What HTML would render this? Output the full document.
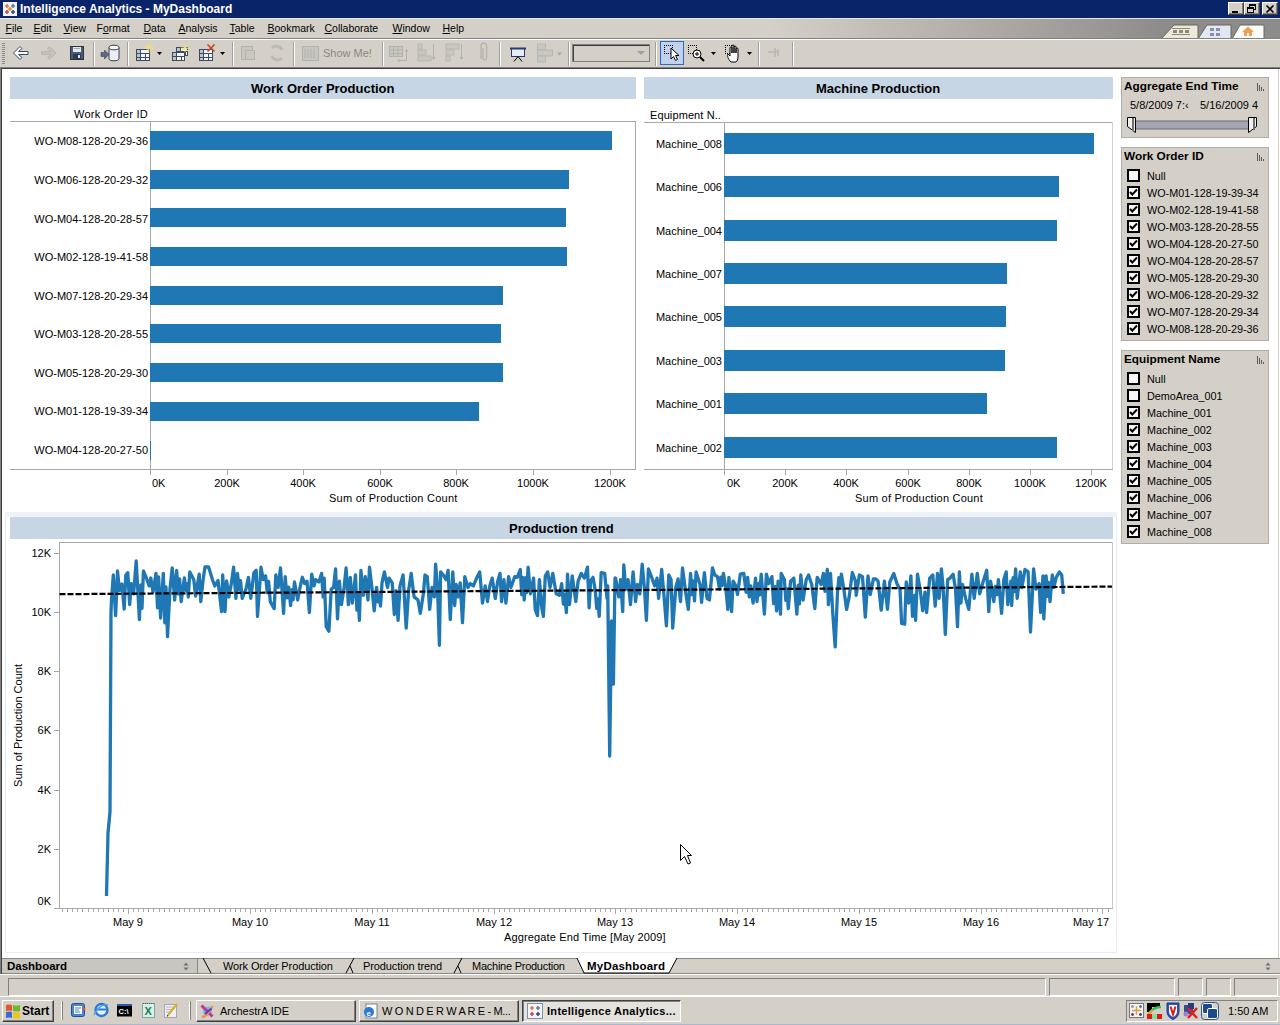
<!DOCTYPE html><html><head><meta charset="utf-8"><style>
html,body{margin:0;padding:0;width:1280px;height:1025px;overflow:hidden;background:#fff;}
body{position:relative;font-family:"Liberation Sans",sans-serif;font-size:11px;color:#000;}
div{position:absolute;box-sizing:border-box;}
.t{white-space:nowrap;line-height:13px;}
.u{text-decoration:underline;}
svg{position:absolute;left:0;top:0;}
</style></head><body>
<div style="left:0px;top:0px;width:1280px;height:18px;background:#0A246A"></div>
<div class="t" style="left:20px;top:2px;font-weight:bold;font-size:12px;color:#fff;line-height:14px">Intelligence Analytics - MyDashboard</div>
<svg style="left:3px;top:2px" width="14" height="14" viewBox="0 0 14 14"><rect x="0" y="0" width="14" height="14" fill="#F4F4F8"/>
<g stroke-width="1.6"><path d="M4 2v4M2 4h4" stroke="#E07B39"/><path d="M10 2v4M8 4h4" stroke="#5B7BA8"/><path d="M4 8v4M2 10h4" stroke="#C0504D"/><path d="M10 8v4M8 10h4" stroke="#2F4F7F"/><path d="M7 5v4M5 7h4" stroke="#E89040"/></g></svg>
<div style="left:1228px;top:2px;width:16px;height:13px;background:#D4D0C8;border-top:1px solid #fff;border-left:1px solid #fff;border-right:1px solid #404040;border-bottom:1px solid #404040;box-shadow:inset -1px -1px 0 #808080"></div>
<svg style="left:1228px;top:2px" width="16" height="14" viewBox="0 0 16 14"><rect x="4" y="9" width="6" height="2" fill="#000"/></svg>
<div style="left:1244px;top:2px;width:16px;height:13px;background:#D4D0C8;border-top:1px solid #fff;border-left:1px solid #fff;border-right:1px solid #404040;border-bottom:1px solid #404040;box-shadow:inset -1px -1px 0 #808080"></div>
<svg style="left:1244px;top:2px" width="16" height="14" viewBox="0 0 16 14"><rect x="5.5" y="2.5" width="6" height="5" fill="none" stroke="#000"/><rect x="5" y="2" width="7" height="2" fill="#000"/><rect x="3.5" y="5.5" width="6" height="5" fill="#D4D0C8" stroke="#000"/><rect x="3" y="5" width="7" height="2" fill="#000"/></svg>
<div style="left:1262px;top:2px;width:16px;height:13px;background:#D4D0C8;border-top:1px solid #fff;border-left:1px solid #fff;border-right:1px solid #404040;border-bottom:1px solid #404040;box-shadow:inset -1px -1px 0 #808080"></div>
<svg style="left:1262px;top:2px" width="16" height="14" viewBox="0 0 16 14"><path d="M4.5 3.5l7 7M11.5 3.5l-7 7" stroke="#000" stroke-width="1.6"/></svg>
<div style="left:0;top:18px;width:1280px;height:20px;background:linear-gradient(90deg,#D4D0C8 0px,#D4D0C8 770px,#C2BCB6 880px,#ADA8A4 1000px,#9A9794 1100px,#8E8C8A 1160px,#8E8C8A 1280px)"></div>
<div style="left:0px;top:18px;width:1280px;height:1px;background:#E8E6E0"></div>
<div class="t" style="left:5.5px;top:21px;font-size:10.5px;line-height:14px"><span class="u">F</span>ile</div>
<div class="t" style="left:33.5px;top:21px;font-size:10.5px;line-height:14px"><span class="u">E</span>dit</div>
<div class="t" style="left:63.5px;top:21px;font-size:10.5px;line-height:14px"><span class="u">V</span>iew</div>
<div class="t" style="left:96.5px;top:21px;font-size:10.5px;line-height:14px">F<span class="u">o</span>rmat</div>
<div class="t" style="left:143.5px;top:21px;font-size:10.5px;line-height:14px"><span class="u">D</span>ata</div>
<div class="t" style="left:178.5px;top:21px;font-size:10.5px;line-height:14px"><span class="u">A</span>nalysis</div>
<div class="t" style="left:229.5px;top:21px;font-size:10.5px;line-height:14px"><span class="u">T</span>able</div>
<div class="t" style="left:267.5px;top:21px;font-size:10.5px;line-height:14px"><span class="u">B</span>ookmark</div>
<div class="t" style="left:324.5px;top:21px;font-size:10.5px;line-height:14px"><span class="u">C</span>ollaborate</div>
<div class="t" style="left:392.5px;top:21px;font-size:10.5px;line-height:14px"><span class="u">W</span>indow</div>
<div class="t" style="left:442.5px;top:21px;font-size:10.5px;line-height:14px"><span class="u">H</span>elp</div>
<svg style="left:1155px;top:24px" width="125" height="15" viewBox="0 0 125 15">
<path d="M6 15 L19 1 L43 1 L43 15 Z" fill="#ECE9D8" stroke="#6A6660"/>
<path d="M43 15 L52 1 L76 1 L76 15 Z" fill="#E3E6F3" stroke="#6A6660"/>
<path d="M77 15 L85 1 L109 1 L109 15 Z" fill="#FCFCFA" stroke="#6A6660"/>
<g fill="#8E8A78"><rect x="18" y="6" width="4" height="3"/><rect x="24" y="6" width="4" height="3"/><rect x="30" y="6" width="4" height="3"/><rect x="17" y="4" width="18" height="1"/><rect x="17" y="10" width="18" height="1"/></g>
<g fill="#8792A8"><rect x="55" y="4" width="4" height="3"/><rect x="61" y="4" width="4" height="3"/><rect x="55" y="9" width="4" height="3"/><rect x="61" y="9" width="4" height="3"/></g>
<path d="M87 8 L93 2.5 L99 8 L97 8 L97 12 L89 12 L89 8 Z" fill="#F0A050"/><rect x="92" y="9" width="2" height="3" fill="#FCFCFA"/>
</svg>
<div style="left:0px;top:38px;width:1280px;height:1px;background:#808080"></div>
<div style="left:0px;top:39px;width:1280px;height:1px;background:#fff"></div>
<div style="left:0px;top:40px;width:1280px;height:27px;background:#D4D0C8"></div>
<svg style="left:2px;top:43px" width="4" height="22" viewBox="0 0 4 22"><rect x="0" y="0" width="3" height="1" fill="#8E8C88"/><rect x="0" y="2" width="3" height="1" fill="#8E8C88"/><rect x="0" y="4" width="3" height="1" fill="#8E8C88"/><rect x="0" y="6" width="3" height="1" fill="#8E8C88"/><rect x="0" y="8" width="3" height="1" fill="#8E8C88"/><rect x="0" y="10" width="3" height="1" fill="#8E8C88"/><rect x="0" y="12" width="3" height="1" fill="#8E8C88"/><rect x="0" y="14" width="3" height="1" fill="#8E8C88"/><rect x="0" y="16" width="3" height="1" fill="#8E8C88"/><rect x="0" y="18" width="3" height="1" fill="#8E8C88"/><rect x="0" y="20" width="3" height="1" fill="#8E8C88"/></svg>
<div style="left:93px;top:42px;width:1px;height:24px;background:#A0A0A0"></div>
<div style="left:94px;top:42px;width:1px;height:24px;background:#fff"></div>
<div style="left:127px;top:42px;width:1px;height:24px;background:#A0A0A0"></div>
<div style="left:128px;top:42px;width:1px;height:24px;background:#fff"></div>
<div style="left:232px;top:42px;width:1px;height:24px;background:#A0A0A0"></div>
<div style="left:233px;top:42px;width:1px;height:24px;background:#fff"></div>
<div style="left:293px;top:42px;width:1px;height:24px;background:#A0A0A0"></div>
<div style="left:294px;top:42px;width:1px;height:24px;background:#fff"></div>
<div style="left:382px;top:42px;width:1px;height:24px;background:#A0A0A0"></div>
<div style="left:383px;top:42px;width:1px;height:24px;background:#fff"></div>
<div style="left:499px;top:42px;width:1px;height:24px;background:#A0A0A0"></div>
<div style="left:500px;top:42px;width:1px;height:24px;background:#fff"></div>
<div style="left:568px;top:42px;width:1px;height:24px;background:#A0A0A0"></div>
<div style="left:569px;top:42px;width:1px;height:24px;background:#fff"></div>
<div style="left:655px;top:42px;width:1px;height:24px;background:#A0A0A0"></div>
<div style="left:656px;top:42px;width:1px;height:24px;background:#fff"></div>
<div style="left:758px;top:42px;width:1px;height:24px;background:#A0A0A0"></div>
<div style="left:759px;top:42px;width:1px;height:24px;background:#fff"></div>
<div style="left:792px;top:42px;width:1px;height:24px;background:#A0A0A0"></div>
<div style="left:793px;top:42px;width:1px;height:24px;background:#fff"></div>
<svg style="left:0;top:40px" width="800" height="27" viewBox="0 0 800 27">
<!-- back arrow -->
<path d="M13.5 13 L20 6.5 L22 8.5 L18.5 11.5 L28 11.5 L28 14.5 L18.5 14.5 L22 17.5 L20 19.5 Z" fill="#fff" stroke="#3A4A70" stroke-width="1"/>
<!-- forward arrow disabled -->
<path d="M56 13 L49.5 6.5 L47.5 8.5 L51 11.5 L41.5 11.5 L41.5 14.5 L51 14.5 L47.5 17.5 L49.5 19.5 Z" fill="#C4C2BC" stroke="#B8B6B0" stroke-width="1"/>
<!-- save -->
<rect x="70.5" y="6.5" width="13" height="13" fill="#4C5C72" stroke="#2A3442"/><rect x="73" y="7" width="8" height="5" fill="#E4EAF4"/><rect x="74" y="8" width="6" height="1" fill="#9AA8BC"/><rect x="73" y="14" width="8" height="5" fill="#2E3A4C"/><rect x="78" y="15" width="2" height="3" fill="#E0E4EA"/>
<!-- db -->
<path d="M101 12.5 h3.5 v-2.5 l4.5 4.5 -4.5 4.5 v-2.5 h-3.5z" fill="#5A6A84" stroke="#3A4658" stroke-width="0.6"/>
<path d="M109 7.5 v11 a5 2.3 0 0 0 10 0 v-11" fill="#ECEEF6" stroke="#343C48"/><ellipse cx="114" cy="7.5" rx="5" ry="2.3" fill="#F6F8FC" stroke="#343C48"/>
<!-- new sheet -->
<rect x="136.5" y="9.5" width="13" height="11" fill="#F2F5FB" stroke="#3C4A5C"/><rect x="137" y="10" width="3" height="10" fill="#B8C4D4"/><path d="M136 13.5h14M136 17.5h14M140.5 9v12M145.5 13v8" stroke="#3C4A5C"/><path d="M148.8 7.8 L153.8 7.8 M148.8 7.8 L152.3 11.3 M148.8 7.8 L148.8 12.8 M148.8 7.8 L145.3 11.3 M148.8 7.8 L143.8 7.8 M148.8 7.8 L145.3 4.3 M148.8 7.8 L148.8 2.8 M148.8 7.8 L152.3 4.3 " stroke="#F2E27A" stroke-width="1"/><path d="M157 12 h5 l-2.5 3z" fill="#000"/>
<!-- duplicate -->
<rect x="176.5" y="7.5" width="11" height="8" fill="#F2F5FB" stroke="#3C4A5C"/><rect x="177" y="8" width="3" height="7" fill="#B8C4D4"/><path d="M176 11.5h12M176 15.5h12M180.5 7v9M185.5 11v5" stroke="#3C4A5C"/><rect x="172.5" y="12.5" width="12" height="8" fill="#F2F5FB" stroke="#3C4A5C"/><rect x="173" y="13" width="3" height="7" fill="#B8C4D4"/><path d="M172 16.5h13M172 20.5h13M176.5 12v9M181.5 16v5" stroke="#3C4A5C"/><path d="M185.0 8.2 L189.0 8.2 M185.0 8.2 L187.8 11.0 M185.0 8.2 L185.0 12.2 M185.0 8.2 L182.2 11.0 M185.0 8.2 L181.0 8.2 M185.0 8.2 L182.2 5.4 M185.0 8.2 L185.0 4.2 M185.0 8.2 L187.8 5.4 " stroke="#F2E27A" stroke-width="1"/>
<!-- clear -->
<rect x="199.5" y="9.5" width="13" height="11" fill="#F2F5FB" stroke="#3C4A5C"/><rect x="200" y="10" width="3" height="10" fill="#B8C4D4"/><path d="M199 13.5h14M199 17.5h14M203.5 9v12M208.5 13v8" stroke="#3C4A5C"/><path d="M207.5 4.5 l7 7 M214.5 4.5 l-7 7" stroke="#C8461E" stroke-width="1.6"/><path d="M220 12 h5 l-2.5 3z" fill="#000"/>
<!-- disabled icons -->
<g fill="#C8C6C0" stroke="#B4B2AC"><rect x="241.5" y="6.5" width="11" height="13"/><rect x="245.5" y="10.5" width="9" height="9"/></g>
<path d="M272 8 a6 6 0 0 1 10 2 M282 18 a6 6 0 0 1 -10 -2" stroke="#BCBAB4" stroke-width="3" fill="none"/>
<rect x="302.5" y="6.5" width="16" height="14" fill="#C8C6C0" stroke="#B4B2AC"/><path d="M305 9v9M308 9v9M311 9v9M314 9v9" stroke="#B4B2AC"/>
<rect x="389.5" y="6.5" width="13" height="10" fill="#C9C7C1" stroke="#B4B2AC"/><path d="M389.5 10h13M389.5 13.5h13M393.5 6.5v10M398 6.5v10" stroke="#B4B2AC"/>
<path d="M406.5 10 v10.5 h-8" stroke="#B4B2AC" fill="none"/><path d="M404.5 11.5 l2 -2.5 2 2.5z M399.5 18.5 l-2.5 2 2.5 2z" fill="#B4B2AC"/>
<rect x="418" y="4" width="4" height="5" fill="#C9C7C1" stroke="#B4B2AC" stroke-width="0.8"/><rect x="418" y="10" width="8" height="5" fill="#C9C7C1" stroke="#B4B2AC" stroke-width="0.8"/><rect x="418" y="16" width="13" height="5" fill="#C9C7C1" stroke="#B4B2AC" stroke-width="0.8"/>
<path d="M433.5 4 v15" stroke="#B4B2AC"/><path d="M431.5 17 l2 3 2-3z" fill="#B4B2AC"/>
<rect x="446" y="4" width="13" height="5" fill="#C9C7C1" stroke="#B4B2AC" stroke-width="0.8"/><rect x="446" y="10" width="8" height="5" fill="#C9C7C1" stroke="#B4B2AC" stroke-width="0.8"/><rect x="446" y="16" width="4" height="5" fill="#C9C7C1" stroke="#B4B2AC" stroke-width="0.8"/>
<path d="M461.5 4 v15" stroke="#B4B2AC"/><path d="M459.5 17 l2 3 2-3z" fill="#B4B2AC"/>
<path d="M481 19 v-13 a2.8 2.8 0 0 1 5.6 0 v12 a1.8 1.8 0 0 1 -3.6 0 v-10" stroke="#B4B2AC" stroke-width="1.3" fill="none"/>
<text x="323" y="17" font-size="11" fill="#8A8884" font-family="Liberation Sans">Show Me!</text>
<!-- presentation -->
<rect x="511.5" y="8.5" width="13" height="8" fill="#E4ECF8" stroke="#2A3A6A"/><rect x="510" y="7.5" width="16" height="2" fill="#2A3A6A"/><path d="M518 16.5 l-4 5 M518 16.5 l4 5" stroke="#000"/>
<g fill="#C9C7C1" stroke="#B4B2AC" stroke-width="0.8"><rect x="537.5" y="4" width="8" height="6"/><rect x="537.5" y="10" width="15" height="6"/><rect x="537.5" y="16" width="8" height="6"/></g><path d="M557 12.5 h5 l-2.5 3z" fill="#A8A6A0"/>
<!-- combo -->
<rect x="572.5" y="4.5" width="77" height="17" fill="#D4D0C8" stroke="#808080"/><rect x="573" y="5" width="76" height="1" fill="#404040"/><rect x="573" y="5" width="1" height="16" fill="#404040"/>
<rect x="634" y="6" width="14" height="14" fill="#D4D0C8" stroke="#fff" stroke-width="0"/><path d="M637 11 h8 l-4 4z" fill="#A0A0A0"/>
<!-- pointer pressed -->
<rect x="660.5" y="1.5" width="23" height="23" fill="#C1D2EE" stroke="#316AC5"/>
<rect x="664" y="5" width="1" height="1" fill="#000"/><rect x="664" y="13" width="1" height="1" fill="#000"/><rect x="666" y="5" width="1" height="1" fill="#000"/><rect x="666" y="13" width="1" height="1" fill="#000"/><rect x="668" y="5" width="1" height="1" fill="#000"/><rect x="668" y="13" width="1" height="1" fill="#000"/><rect x="670" y="5" width="1" height="1" fill="#000"/><rect x="670" y="13" width="1" height="1" fill="#000"/><rect x="664" y="5" width="1" height="1" fill="#000"/><rect x="672" y="5" width="1" height="1" fill="#000"/><rect x="664" y="7" width="1" height="1" fill="#000"/><rect x="672" y="7" width="1" height="1" fill="#000"/><rect x="664" y="9" width="1" height="1" fill="#000"/><rect x="672" y="9" width="1" height="1" fill="#000"/><rect x="664" y="11" width="1" height="1" fill="#000"/><rect x="672" y="11" width="1" height="1" fill="#000"/><rect x="664" y="13" width="1" height="1" fill="#000"/><rect x="672" y="13" width="1" height="1" fill="#000"/>
<path d="M671 8 v11 l2.5-2.5 2 4 2-1 -2-4 3.5 0z" fill="#fff" stroke="#000"/>
<!-- zoom -->
<rect x="688" y="5" width="1" height="1" fill="#000"/><rect x="688" y="13" width="1" height="1" fill="#000"/><rect x="690" y="5" width="1" height="1" fill="#000"/><rect x="690" y="13" width="1" height="1" fill="#000"/><rect x="692" y="5" width="1" height="1" fill="#000"/><rect x="692" y="13" width="1" height="1" fill="#000"/><rect x="694" y="5" width="1" height="1" fill="#000"/><rect x="694" y="13" width="1" height="1" fill="#000"/><rect x="688" y="5" width="1" height="1" fill="#000"/><rect x="696" y="5" width="1" height="1" fill="#000"/><rect x="688" y="7" width="1" height="1" fill="#000"/><rect x="696" y="7" width="1" height="1" fill="#000"/><rect x="688" y="9" width="1" height="1" fill="#000"/><rect x="696" y="9" width="1" height="1" fill="#000"/><rect x="688" y="11" width="1" height="1" fill="#000"/><rect x="696" y="11" width="1" height="1" fill="#000"/><rect x="688" y="13" width="1" height="1" fill="#000"/><rect x="696" y="13" width="1" height="1" fill="#000"/>
<circle cx="697" cy="14" r="4" fill="#fff" stroke="#000"/><path d="M695 14h4M697 12v4" stroke="#000"/><path d="M700 17 l4 4" stroke="#000" stroke-width="2"/>
<path d="M711 12 h5 l-2.5 3z" fill="#000"/>
<!-- pan -->
<rect x="725" y="5" width="1" height="1" fill="#000"/><rect x="725" y="13" width="1" height="1" fill="#000"/><rect x="727" y="5" width="1" height="1" fill="#000"/><rect x="727" y="13" width="1" height="1" fill="#000"/><rect x="729" y="5" width="1" height="1" fill="#000"/><rect x="729" y="13" width="1" height="1" fill="#000"/><rect x="731" y="5" width="1" height="1" fill="#000"/><rect x="731" y="13" width="1" height="1" fill="#000"/><rect x="725" y="5" width="1" height="1" fill="#000"/><rect x="733" y="5" width="1" height="1" fill="#000"/><rect x="725" y="7" width="1" height="1" fill="#000"/><rect x="733" y="7" width="1" height="1" fill="#000"/><rect x="725" y="9" width="1" height="1" fill="#000"/><rect x="733" y="9" width="1" height="1" fill="#000"/><rect x="725" y="11" width="1" height="1" fill="#000"/><rect x="733" y="11" width="1" height="1" fill="#000"/><rect x="725" y="13" width="1" height="1" fill="#000"/><rect x="733" y="13" width="1" height="1" fill="#000"/>
<path d="M731 22 c-3-3 -4-6 -3-8 l2 2 v-8 a1 1 0 0 1 2 0 v5 v-7 a1 1 0 0 1 2 0 v7 v-6 a1 1 0 0 1 2 0 v6 v-4 a1 1 0 0 1 2 0 v8 c0 3 -1 4 -2 5z" fill="#fff" stroke="#000"/>
<path d="M747 12 h5 l-2.5 3z" fill="#000"/>
<path d="M768 12h10M775 8v9M778 9v7" stroke="#B8B6B0" stroke-width="1.5"/>
</svg>
<div style="left:0px;top:67px;width:1280px;height:1px;background:#808080"></div>
<div style="left:0px;top:68px;width:1280px;height:1px;background:#404040"></div>
<div style="left:0px;top:69px;width:1280px;height:889px;background:#fff"></div>
<div style="left:1278px;top:69px;width:1px;height:889px;background:#D4D0C8"></div>
<div style="left:10px;top:77px;width:626px;height:22px;background:#C6D6E4"></div>
<div class="t" style="left:251px;top:81px;font-weight:bold;font-size:13px;line-height:16px">Work Order Production</div>
<div class="t" style="left:74px;top:108px;font-size:11px;letter-spacing:0.25px">Work Order ID</div>
<div style="left:10px;top:121px;width:626px;height:1px;background:#A8A8A8"></div>
<div style="left:635px;top:121px;width:1px;height:349px;background:#A8A8A8"></div>
<div style="left:150px;top:121px;width:1px;height:349px;background:#A8A8A8"></div>
<div style="left:10px;top:469px;width:626px;height:1px;background:#A8A8A8"></div>
<div style="left:150px;top:131px;width:462px;height:19px;background:#1F77B4"></div>
<div class="t" style="left:0;top:135px;width:148px;text-align:right">WO-M08-128-20-29-36</div>
<div style="left:150px;top:170px;width:419px;height:19px;background:#1F77B4"></div>
<div class="t" style="left:0;top:174px;width:148px;text-align:right">WO-M06-128-20-29-32</div>
<div style="left:150px;top:208px;width:416px;height:19px;background:#1F77B4"></div>
<div class="t" style="left:0;top:213px;width:148px;text-align:right">WO-M04-128-20-28-57</div>
<div style="left:150px;top:247px;width:417px;height:19px;background:#1F77B4"></div>
<div class="t" style="left:0;top:251px;width:148px;text-align:right">WO-M02-128-19-41-58</div>
<div style="left:150px;top:286px;width:353px;height:19px;background:#1F77B4"></div>
<div class="t" style="left:0;top:290px;width:148px;text-align:right">WO-M07-128-20-29-34</div>
<div style="left:150px;top:324px;width:351px;height:19px;background:#1F77B4"></div>
<div class="t" style="left:0;top:328px;width:148px;text-align:right">WO-M03-128-20-28-55</div>
<div style="left:150px;top:363px;width:353px;height:19px;background:#1F77B4"></div>
<div class="t" style="left:0;top:367px;width:148px;text-align:right">WO-M05-128-20-29-30</div>
<div style="left:150px;top:402px;width:329px;height:19px;background:#1F77B4"></div>
<div class="t" style="left:0;top:405px;width:148px;text-align:right">WO-M01-128-19-39-34</div>
<div style="left:150px;top:441px;width:1px;height:19px;background:#1F77B4"></div>
<div class="t" style="left:0;top:444px;width:148px;text-align:right">WO-M04-128-20-27-50</div>
<div style="left:150px;top:470px;width:1px;height:5px;background:#A8A8A8"></div>
<div class="t" style="left:152px;top:477px">0K</div>
<div style="left:227px;top:470px;width:1px;height:5px;background:#A8A8A8"></div>
<div class="t" style="left:187px;top:477px;width:80px;text-align:center">200K</div>
<div style="left:303px;top:470px;width:1px;height:5px;background:#A8A8A8"></div>
<div class="t" style="left:263px;top:477px;width:80px;text-align:center">400K</div>
<div style="left:380px;top:470px;width:1px;height:5px;background:#A8A8A8"></div>
<div class="t" style="left:340px;top:477px;width:80px;text-align:center">600K</div>
<div style="left:456px;top:470px;width:1px;height:5px;background:#A8A8A8"></div>
<div class="t" style="left:416px;top:477px;width:80px;text-align:center">800K</div>
<div style="left:533px;top:470px;width:1px;height:5px;background:#A8A8A8"></div>
<div class="t" style="left:493px;top:477px;width:80px;text-align:center">1000K</div>
<div style="left:610px;top:470px;width:1px;height:5px;background:#A8A8A8"></div>
<div class="t" style="left:570px;top:477px;width:80px;text-align:center">1200K</div>
<div class="t" style="left:329px;top:492px;font-size:11px;letter-spacing:0.25px">Sum of Production Count</div>
<div style="left:644px;top:77px;width:469px;height:22px;background:#C6D6E4"></div>
<div class="t" style="left:816px;top:81px;font-weight:bold;font-size:13px;line-height:16px">Machine Production</div>
<div class="t" style="left:650px;top:109px;font-size:11px;letter-spacing:0.1px">Equipment N..</div>
<div style="left:644px;top:122px;width:469px;height:1px;background:#A8A8A8"></div>
<div style="left:1112px;top:122px;width:1px;height:348px;background:#D0D0D0"></div>
<div style="left:724px;top:122px;width:1px;height:348px;background:#A8A8A8"></div>
<div style="left:644px;top:469px;width:469px;height:1px;background:#A8A8A8"></div>
<div style="left:724px;top:133px;width:370px;height:21px;background:#1F77B4"></div>
<div class="t" style="left:600px;top:138px;width:122px;text-align:right">Machine_008</div>
<div style="left:724px;top:176px;width:335px;height:21px;background:#1F77B4"></div>
<div class="t" style="left:600px;top:181px;width:122px;text-align:right">Machine_006</div>
<div style="left:724px;top:220px;width:333px;height:21px;background:#1F77B4"></div>
<div class="t" style="left:600px;top:225px;width:122px;text-align:right">Machine_004</div>
<div style="left:724px;top:263px;width:283px;height:21px;background:#1F77B4"></div>
<div class="t" style="left:600px;top:268px;width:122px;text-align:right">Machine_007</div>
<div style="left:724px;top:306px;width:282px;height:21px;background:#1F77B4"></div>
<div class="t" style="left:600px;top:311px;width:122px;text-align:right">Machine_005</div>
<div style="left:724px;top:350px;width:281px;height:21px;background:#1F77B4"></div>
<div class="t" style="left:600px;top:355px;width:122px;text-align:right">Machine_003</div>
<div style="left:724px;top:393px;width:263px;height:21px;background:#1F77B4"></div>
<div class="t" style="left:600px;top:398px;width:122px;text-align:right">Machine_001</div>
<div style="left:724px;top:437px;width:333px;height:21px;background:#1F77B4"></div>
<div class="t" style="left:600px;top:442px;width:122px;text-align:right">Machine_002</div>
<div style="left:724px;top:470px;width:1px;height:5px;background:#A8A8A8"></div>
<div class="t" style="left:727px;top:477px">0K</div>
<div style="left:785px;top:470px;width:1px;height:5px;background:#A8A8A8"></div>
<div class="t" style="left:745px;top:477px;width:80px;text-align:center">200K</div>
<div style="left:846px;top:470px;width:1px;height:5px;background:#A8A8A8"></div>
<div class="t" style="left:806px;top:477px;width:80px;text-align:center">400K</div>
<div style="left:908px;top:470px;width:1px;height:5px;background:#A8A8A8"></div>
<div class="t" style="left:868px;top:477px;width:80px;text-align:center">600K</div>
<div style="left:969px;top:470px;width:1px;height:5px;background:#A8A8A8"></div>
<div class="t" style="left:929px;top:477px;width:80px;text-align:center">800K</div>
<div style="left:1030px;top:470px;width:1px;height:5px;background:#A8A8A8"></div>
<div class="t" style="left:990px;top:477px;width:80px;text-align:center">1000K</div>
<div style="left:1091px;top:470px;width:1px;height:5px;background:#A8A8A8"></div>
<div class="t" style="left:1051px;top:477px;width:80px;text-align:center">1200K</div>
<div class="t" style="left:855px;top:492px;font-size:11px;letter-spacing:0.22px">Sum of Production Count</div>
<div style="left:5px;top:512px;width:1112px;height:441px;border:1px solid #E6ECF2;border-top:none"></div>
<div style="left:5px;top:512px;width:1112px;height:5px;background:#EEF3F7"></div>
<div style="left:10px;top:517px;width:1103px;height:22px;background:#C6D6E4"></div>
<div class="t" style="left:509px;top:521px;font-weight:bold;font-size:13px;line-height:16px">Production trend</div>
<div style="left:59px;top:542px;width:1054px;height:1px;background:#A8A8A8"></div>
<div style="left:1112px;top:542px;width:1px;height:367px;background:#C8C8C8"></div>
<div style="left:59px;top:542px;width:1px;height:367px;background:#A8A8A8"></div>
<div style="left:54px;top:908px;width:1059px;height:1px;background:#A8A8A8"></div>
<div style="left:54px;top:908px;width:5px;height:1px;background:#A8A8A8"></div>
<div class="t" style="left:0;top:895px;width:51px;text-align:right">0K</div>
<div style="left:54px;top:849px;width:5px;height:1px;background:#A8A8A8"></div>
<div class="t" style="left:0;top:843px;width:51px;text-align:right">2K</div>
<div style="left:54px;top:790px;width:5px;height:1px;background:#A8A8A8"></div>
<div class="t" style="left:0;top:784px;width:51px;text-align:right">4K</div>
<div style="left:54px;top:730px;width:5px;height:1px;background:#A8A8A8"></div>
<div class="t" style="left:0;top:724px;width:51px;text-align:right">6K</div>
<div style="left:54px;top:671px;width:5px;height:1px;background:#A8A8A8"></div>
<div class="t" style="left:0;top:665px;width:51px;text-align:right">8K</div>
<div style="left:54px;top:612px;width:5px;height:1px;background:#A8A8A8"></div>
<div class="t" style="left:0;top:606px;width:51px;text-align:right">10K</div>
<div style="left:54px;top:553px;width:5px;height:1px;background:#A8A8A8"></div>
<div class="t" style="left:0;top:547px;width:51px;text-align:right">12K</div>
<div class="t" style="left:-57px;top:719px;transform:rotate(-90deg);width:150px;text-align:center">Sum of Production Count</div>
<div class="t" style="left:88px;top:916px;width:80px;text-align:center">May 9</div>
<div class="t" style="left:210px;top:916px;width:80px;text-align:center">May 10</div>
<div class="t" style="left:332px;top:916px;width:80px;text-align:center">May 11</div>
<div class="t" style="left:454px;top:916px;width:80px;text-align:center">May 12</div>
<div class="t" style="left:575px;top:916px;width:80px;text-align:center">May 13</div>
<div class="t" style="left:697px;top:916px;width:80px;text-align:center">May 14</div>
<div class="t" style="left:819px;top:916px;width:80px;text-align:center">May 15</div>
<div class="t" style="left:941px;top:916px;width:80px;text-align:center">May 16</div>
<div class="t" style="left:1029px;top:916px;width:80px;text-align:right">May 17</div>
<svg width="1280" height="1025" viewBox="0 0 1280 1025"><rect x="62" y="909" width="1" height="3" fill="#A8A8A8"/><rect x="67" y="909" width="1" height="3" fill="#A8A8A8"/><rect x="72" y="909" width="1" height="3" fill="#A8A8A8"/><rect x="77" y="909" width="1" height="3" fill="#A8A8A8"/><rect x="82" y="909" width="1" height="3" fill="#A8A8A8"/><rect x="88" y="909" width="1" height="3" fill="#A8A8A8"/><rect x="93" y="909" width="1" height="3" fill="#A8A8A8"/><rect x="98" y="909" width="1" height="3" fill="#A8A8A8"/><rect x="103" y="909" width="1" height="3" fill="#A8A8A8"/><rect x="108" y="909" width="1" height="3" fill="#A8A8A8"/><rect x="113" y="909" width="1" height="3" fill="#A8A8A8"/><rect x="118" y="909" width="1" height="3" fill="#A8A8A8"/><rect x="123" y="909" width="1" height="3" fill="#A8A8A8"/><rect x="128" y="909" width="1" height="3" fill="#A8A8A8"/><rect x="133" y="909" width="1" height="3" fill="#A8A8A8"/><rect x="138" y="909" width="1" height="3" fill="#A8A8A8"/><rect x="143" y="909" width="1" height="3" fill="#A8A8A8"/><rect x="148" y="909" width="1" height="3" fill="#A8A8A8"/><rect x="153" y="909" width="1" height="3" fill="#A8A8A8"/><rect x="159" y="909" width="1" height="3" fill="#A8A8A8"/><rect x="164" y="909" width="1" height="3" fill="#A8A8A8"/><rect x="169" y="909" width="1" height="3" fill="#A8A8A8"/><rect x="174" y="909" width="1" height="3" fill="#A8A8A8"/><rect x="179" y="909" width="1" height="3" fill="#A8A8A8"/><rect x="184" y="909" width="1" height="3" fill="#A8A8A8"/><rect x="189" y="909" width="1" height="3" fill="#A8A8A8"/><rect x="194" y="909" width="1" height="3" fill="#A8A8A8"/><rect x="199" y="909" width="1" height="3" fill="#A8A8A8"/><rect x="204" y="909" width="1" height="3" fill="#A8A8A8"/><rect x="209" y="909" width="1" height="3" fill="#A8A8A8"/><rect x="214" y="909" width="1" height="3" fill="#A8A8A8"/><rect x="219" y="909" width="1" height="3" fill="#A8A8A8"/><rect x="225" y="909" width="1" height="3" fill="#A8A8A8"/><rect x="230" y="909" width="1" height="3" fill="#A8A8A8"/><rect x="235" y="909" width="1" height="3" fill="#A8A8A8"/><rect x="240" y="909" width="1" height="3" fill="#A8A8A8"/><rect x="245" y="909" width="1" height="3" fill="#A8A8A8"/><rect x="250" y="909" width="1" height="3" fill="#A8A8A8"/><rect x="255" y="909" width="1" height="3" fill="#A8A8A8"/><rect x="260" y="909" width="1" height="3" fill="#A8A8A8"/><rect x="265" y="909" width="1" height="3" fill="#A8A8A8"/><rect x="270" y="909" width="1" height="3" fill="#A8A8A8"/><rect x="275" y="909" width="1" height="3" fill="#A8A8A8"/><rect x="280" y="909" width="1" height="3" fill="#A8A8A8"/><rect x="285" y="909" width="1" height="3" fill="#A8A8A8"/><rect x="290" y="909" width="1" height="3" fill="#A8A8A8"/><rect x="296" y="909" width="1" height="3" fill="#A8A8A8"/><rect x="301" y="909" width="1" height="3" fill="#A8A8A8"/><rect x="306" y="909" width="1" height="3" fill="#A8A8A8"/><rect x="311" y="909" width="1" height="3" fill="#A8A8A8"/><rect x="316" y="909" width="1" height="3" fill="#A8A8A8"/><rect x="321" y="909" width="1" height="3" fill="#A8A8A8"/><rect x="326" y="909" width="1" height="3" fill="#A8A8A8"/><rect x="331" y="909" width="1" height="3" fill="#A8A8A8"/><rect x="336" y="909" width="1" height="3" fill="#A8A8A8"/><rect x="341" y="909" width="1" height="3" fill="#A8A8A8"/><rect x="346" y="909" width="1" height="3" fill="#A8A8A8"/><rect x="351" y="909" width="1" height="3" fill="#A8A8A8"/><rect x="356" y="909" width="1" height="3" fill="#A8A8A8"/><rect x="362" y="909" width="1" height="3" fill="#A8A8A8"/><rect x="367" y="909" width="1" height="3" fill="#A8A8A8"/><rect x="372" y="909" width="1" height="3" fill="#A8A8A8"/><rect x="377" y="909" width="1" height="3" fill="#A8A8A8"/><rect x="382" y="909" width="1" height="3" fill="#A8A8A8"/><rect x="387" y="909" width="1" height="3" fill="#A8A8A8"/><rect x="392" y="909" width="1" height="3" fill="#A8A8A8"/><rect x="397" y="909" width="1" height="3" fill="#A8A8A8"/><rect x="402" y="909" width="1" height="3" fill="#A8A8A8"/><rect x="407" y="909" width="1" height="3" fill="#A8A8A8"/><rect x="412" y="909" width="1" height="3" fill="#A8A8A8"/><rect x="417" y="909" width="1" height="3" fill="#A8A8A8"/><rect x="422" y="909" width="1" height="3" fill="#A8A8A8"/><rect x="428" y="909" width="1" height="3" fill="#A8A8A8"/><rect x="433" y="909" width="1" height="3" fill="#A8A8A8"/><rect x="438" y="909" width="1" height="3" fill="#A8A8A8"/><rect x="443" y="909" width="1" height="3" fill="#A8A8A8"/><rect x="448" y="909" width="1" height="3" fill="#A8A8A8"/><rect x="453" y="909" width="1" height="3" fill="#A8A8A8"/><rect x="458" y="909" width="1" height="3" fill="#A8A8A8"/><rect x="463" y="909" width="1" height="3" fill="#A8A8A8"/><rect x="468" y="909" width="1" height="3" fill="#A8A8A8"/><rect x="473" y="909" width="1" height="3" fill="#A8A8A8"/><rect x="478" y="909" width="1" height="3" fill="#A8A8A8"/><rect x="483" y="909" width="1" height="3" fill="#A8A8A8"/><rect x="488" y="909" width="1" height="3" fill="#A8A8A8"/><rect x="494" y="909" width="1" height="3" fill="#A8A8A8"/><rect x="499" y="909" width="1" height="3" fill="#A8A8A8"/><rect x="504" y="909" width="1" height="3" fill="#A8A8A8"/><rect x="509" y="909" width="1" height="3" fill="#A8A8A8"/><rect x="514" y="909" width="1" height="3" fill="#A8A8A8"/><rect x="519" y="909" width="1" height="3" fill="#A8A8A8"/><rect x="524" y="909" width="1" height="3" fill="#A8A8A8"/><rect x="529" y="909" width="1" height="3" fill="#A8A8A8"/><rect x="534" y="909" width="1" height="3" fill="#A8A8A8"/><rect x="539" y="909" width="1" height="3" fill="#A8A8A8"/><rect x="544" y="909" width="1" height="3" fill="#A8A8A8"/><rect x="549" y="909" width="1" height="3" fill="#A8A8A8"/><rect x="554" y="909" width="1" height="3" fill="#A8A8A8"/><rect x="559" y="909" width="1" height="3" fill="#A8A8A8"/><rect x="565" y="909" width="1" height="3" fill="#A8A8A8"/><rect x="570" y="909" width="1" height="3" fill="#A8A8A8"/><rect x="575" y="909" width="1" height="3" fill="#A8A8A8"/><rect x="580" y="909" width="1" height="3" fill="#A8A8A8"/><rect x="585" y="909" width="1" height="3" fill="#A8A8A8"/><rect x="590" y="909" width="1" height="3" fill="#A8A8A8"/><rect x="595" y="909" width="1" height="3" fill="#A8A8A8"/><rect x="600" y="909" width="1" height="3" fill="#A8A8A8"/><rect x="605" y="909" width="1" height="3" fill="#A8A8A8"/><rect x="610" y="909" width="1" height="3" fill="#A8A8A8"/><rect x="615" y="909" width="1" height="3" fill="#A8A8A8"/><rect x="620" y="909" width="1" height="3" fill="#A8A8A8"/><rect x="625" y="909" width="1" height="3" fill="#A8A8A8"/><rect x="631" y="909" width="1" height="3" fill="#A8A8A8"/><rect x="636" y="909" width="1" height="3" fill="#A8A8A8"/><rect x="641" y="909" width="1" height="3" fill="#A8A8A8"/><rect x="646" y="909" width="1" height="3" fill="#A8A8A8"/><rect x="651" y="909" width="1" height="3" fill="#A8A8A8"/><rect x="656" y="909" width="1" height="3" fill="#A8A8A8"/><rect x="661" y="909" width="1" height="3" fill="#A8A8A8"/><rect x="666" y="909" width="1" height="3" fill="#A8A8A8"/><rect x="671" y="909" width="1" height="3" fill="#A8A8A8"/><rect x="676" y="909" width="1" height="3" fill="#A8A8A8"/><rect x="681" y="909" width="1" height="3" fill="#A8A8A8"/><rect x="686" y="909" width="1" height="3" fill="#A8A8A8"/><rect x="691" y="909" width="1" height="3" fill="#A8A8A8"/><rect x="696" y="909" width="1" height="3" fill="#A8A8A8"/><rect x="702" y="909" width="1" height="3" fill="#A8A8A8"/><rect x="707" y="909" width="1" height="3" fill="#A8A8A8"/><rect x="712" y="909" width="1" height="3" fill="#A8A8A8"/><rect x="717" y="909" width="1" height="3" fill="#A8A8A8"/><rect x="722" y="909" width="1" height="3" fill="#A8A8A8"/><rect x="727" y="909" width="1" height="3" fill="#A8A8A8"/><rect x="732" y="909" width="1" height="3" fill="#A8A8A8"/><rect x="737" y="909" width="1" height="3" fill="#A8A8A8"/><rect x="742" y="909" width="1" height="3" fill="#A8A8A8"/><rect x="747" y="909" width="1" height="3" fill="#A8A8A8"/><rect x="752" y="909" width="1" height="3" fill="#A8A8A8"/><rect x="757" y="909" width="1" height="3" fill="#A8A8A8"/><rect x="762" y="909" width="1" height="3" fill="#A8A8A8"/><rect x="768" y="909" width="1" height="3" fill="#A8A8A8"/><rect x="773" y="909" width="1" height="3" fill="#A8A8A8"/><rect x="778" y="909" width="1" height="3" fill="#A8A8A8"/><rect x="783" y="909" width="1" height="3" fill="#A8A8A8"/><rect x="788" y="909" width="1" height="3" fill="#A8A8A8"/><rect x="793" y="909" width="1" height="3" fill="#A8A8A8"/><rect x="798" y="909" width="1" height="3" fill="#A8A8A8"/><rect x="803" y="909" width="1" height="3" fill="#A8A8A8"/><rect x="808" y="909" width="1" height="3" fill="#A8A8A8"/><rect x="813" y="909" width="1" height="3" fill="#A8A8A8"/><rect x="818" y="909" width="1" height="3" fill="#A8A8A8"/><rect x="823" y="909" width="1" height="3" fill="#A8A8A8"/><rect x="828" y="909" width="1" height="3" fill="#A8A8A8"/><rect x="834" y="909" width="1" height="3" fill="#A8A8A8"/><rect x="839" y="909" width="1" height="3" fill="#A8A8A8"/><rect x="844" y="909" width="1" height="3" fill="#A8A8A8"/><rect x="849" y="909" width="1" height="3" fill="#A8A8A8"/><rect x="854" y="909" width="1" height="3" fill="#A8A8A8"/><rect x="859" y="909" width="1" height="3" fill="#A8A8A8"/><rect x="864" y="909" width="1" height="3" fill="#A8A8A8"/><rect x="869" y="909" width="1" height="3" fill="#A8A8A8"/><rect x="874" y="909" width="1" height="3" fill="#A8A8A8"/><rect x="879" y="909" width="1" height="3" fill="#A8A8A8"/><rect x="884" y="909" width="1" height="3" fill="#A8A8A8"/><rect x="889" y="909" width="1" height="3" fill="#A8A8A8"/><rect x="894" y="909" width="1" height="3" fill="#A8A8A8"/><rect x="899" y="909" width="1" height="3" fill="#A8A8A8"/><rect x="905" y="909" width="1" height="3" fill="#A8A8A8"/><rect x="910" y="909" width="1" height="3" fill="#A8A8A8"/><rect x="915" y="909" width="1" height="3" fill="#A8A8A8"/><rect x="920" y="909" width="1" height="3" fill="#A8A8A8"/><rect x="925" y="909" width="1" height="3" fill="#A8A8A8"/><rect x="930" y="909" width="1" height="3" fill="#A8A8A8"/><rect x="935" y="909" width="1" height="3" fill="#A8A8A8"/><rect x="940" y="909" width="1" height="3" fill="#A8A8A8"/><rect x="945" y="909" width="1" height="3" fill="#A8A8A8"/><rect x="950" y="909" width="1" height="3" fill="#A8A8A8"/><rect x="955" y="909" width="1" height="3" fill="#A8A8A8"/><rect x="960" y="909" width="1" height="3" fill="#A8A8A8"/><rect x="965" y="909" width="1" height="3" fill="#A8A8A8"/><rect x="971" y="909" width="1" height="3" fill="#A8A8A8"/><rect x="976" y="909" width="1" height="3" fill="#A8A8A8"/><rect x="981" y="909" width="1" height="3" fill="#A8A8A8"/><rect x="986" y="909" width="1" height="3" fill="#A8A8A8"/><rect x="991" y="909" width="1" height="3" fill="#A8A8A8"/><rect x="996" y="909" width="1" height="3" fill="#A8A8A8"/><rect x="1001" y="909" width="1" height="3" fill="#A8A8A8"/><rect x="1006" y="909" width="1" height="3" fill="#A8A8A8"/><rect x="1011" y="909" width="1" height="3" fill="#A8A8A8"/><rect x="1016" y="909" width="1" height="3" fill="#A8A8A8"/><rect x="1021" y="909" width="1" height="3" fill="#A8A8A8"/><rect x="1026" y="909" width="1" height="3" fill="#A8A8A8"/><rect x="1031" y="909" width="1" height="3" fill="#A8A8A8"/><rect x="1037" y="909" width="1" height="3" fill="#A8A8A8"/><rect x="1042" y="909" width="1" height="3" fill="#A8A8A8"/><rect x="1047" y="909" width="1" height="3" fill="#A8A8A8"/><rect x="1052" y="909" width="1" height="3" fill="#A8A8A8"/><rect x="1057" y="909" width="1" height="3" fill="#A8A8A8"/><rect x="1062" y="909" width="1" height="3" fill="#A8A8A8"/><rect x="1067" y="909" width="1" height="3" fill="#A8A8A8"/><rect x="1072" y="909" width="1" height="3" fill="#A8A8A8"/><rect x="1077" y="909" width="1" height="3" fill="#A8A8A8"/><rect x="1082" y="909" width="1" height="3" fill="#A8A8A8"/><rect x="1087" y="909" width="1" height="3" fill="#A8A8A8"/><rect x="1092" y="909" width="1" height="3" fill="#A8A8A8"/><rect x="1097" y="909" width="1" height="3" fill="#A8A8A8"/><rect x="1102" y="909" width="1" height="3" fill="#A8A8A8"/><rect x="1108" y="909" width="1" height="3" fill="#A8A8A8"/><rect x="128" y="909" width="1" height="5" fill="#A8A8A8"/><rect x="250" y="909" width="1" height="5" fill="#A8A8A8"/><rect x="372" y="909" width="1" height="5" fill="#A8A8A8"/><rect x="494" y="909" width="1" height="5" fill="#A8A8A8"/><rect x="615" y="909" width="1" height="5" fill="#A8A8A8"/><rect x="737" y="909" width="1" height="5" fill="#A8A8A8"/><rect x="859" y="909" width="1" height="5" fill="#A8A8A8"/><rect x="981" y="909" width="1" height="5" fill="#A8A8A8"/><rect x="1102" y="909" width="1" height="5" fill="#A8A8A8"/></svg>
<div class="t" style="left:504px;top:931px;letter-spacing:0.14px">Aggregate End Time [May 2009]</div>
<svg width="1280" height="1025" viewBox="0 0 1280 1025">
<polyline points="106.5,896.0 108.0,833.0 110.0,812.0 111.0,612.0 111.5,600.0 113.3,575.0 115.6,615.6 117.5,571.0 119.5,590.6 121.9,584.0 124.2,609.0 125.8,575.0 127.8,572.7 129.7,604.7 131.2,583.6 133.6,593.8 136.2,561.0 139.4,619.5 140.8,584.8 142.0,608.3 143.4,571.0 146.0,577.0 149.2,586.0 150.8,578.0 153.0,592.0 156.0,573.4 157.5,607.8 158.6,577.0 160.6,618.0 163.3,573.4 164.8,622.8 166.0,587.0 167.5,636.7 170.0,589.0 172.2,568.0 174.7,600.0 176.6,570.3 178.3,594.0 179.6,578.8 181.2,601.6 184.4,578.0 185.8,590.6 186.9,583.7 188.3,597.0 189.8,571.9 193.8,579.7 195.6,596.0 199.2,574.2 200.8,601.6 203.1,579.7 205.0,567.0 208.6,567.0 212.5,579.7 214.8,586.0 218.0,580.5 221.6,611.7 222.7,575.0 225.0,611.7 226.6,581.0 228.9,597.0 231.2,584.4 233.6,567.2 235.9,598.4 237.5,573.4 239.2,589.8 240.5,580.6 242.2,598.4 246.0,589.0 248.4,577.3 250.8,598.4 253.9,572.7 256.2,570.3 257.5,616.4 261.0,567.2 263.3,579.7 265.6,575.8 267.3,592.9 268.6,581.4 270.3,601.6 274.2,608.6 275.8,575.0 278.1,587.5 280.5,568.0 283.6,613.3 285.2,576.6 287.1,597.8 288.7,587.2 290.6,605.5 292.0,589.6 293.1,599.8 294.5,582.0 297.7,600.0 300.0,587.5 302.3,577.3 304.7,583.6 307.0,581.2 309.4,612.5 311.7,574.2 314.1,585.9 315.6,579.7 318.8,582.0 321.6,573.4 323.1,596.9 324.2,578.1 326.2,626.6 328.9,631.2 331.2,589.1 333.6,587.5 335.6,568.8 337.5,618.8 339.4,581.2 341.4,604.7 344.1,587.5 346.1,568.0 348.4,604.7 350.3,577.3 352.3,603.1 355.5,575.0 356.9,610.1 358.0,592.7 359.4,620.3 360.9,570.3 363.3,595.3 365.3,576.6 368.0,600.0 369.5,567.2 371.9,587.5 374.2,610.9 376.6,587.5 378.0,601.9 379.1,592.7 380.5,606.2 382.0,582.8 384.4,571.9 387.5,587.5 389.1,578.1 392.2,582.8 394.3,614.5 396.0,590.7 398.1,620.3 400.0,585.9 403.1,575.0 406.2,628.1 408.6,590.6 411.2,573.4 414.1,596.9 418.0,600.0 420.3,613.3 423.4,593.8 425.0,575.0 427.3,576.6 429.7,609.4 432.0,587.5 434.4,596.9 435.6,564.1 437.5,587.5 439.4,645.3 440.6,571.9 443.8,575.8 446.1,579.7 448.1,570.3 450.3,619.5 452.8,571.9 454.7,605.5 456.2,584.4 458.1,596.9 460.2,582.8 462.5,622.7 464.8,576.6 468.0,587.5 470.3,583.6 473.4,585.9 476.6,578.1 479.7,571.9 482.5,603.1 485.2,585.9 487.5,601.6 489.8,585.9 492.2,578.1 495.3,598.4 497.7,581.2 500.0,573.4 501.6,601.6 503.9,579.7 505.9,603.1 508.6,576.6 510.9,587.5 514.8,576.6 517.2,577.3 520.3,569.5 521.7,594.6 522.8,577.4 524.2,600.0 525.6,577.7 526.7,592.7 528.1,567.2 530.5,593.8 533.6,578.1 535.2,609.4 537.5,615.6 539.4,579.7 541.9,608.6 543.4,616.4 545.3,575.8 547.7,571.9 550.0,587.5 552.8,573.4 556.2,593.8 559.4,595.3 561.7,583.6 563.4,604.2 564.7,594.1 566.4,612.5 567.5,574.2 569.5,604.7 572.2,575.8 575.8,601.6 578.1,581.2 581.2,573.4 584.4,578.1 587.5,567.2 589.1,607.8 590.6,581.2 593.0,577.3 595.3,590.6 596.7,608.3 597.8,598.8 599.2,616.4 601.2,572.7 604.7,573.4 607.0,598.4 607.7,586.0 609.7,756.0 611.5,621.0 613.4,684.0 615.0,578.0 615.6,578.1 618.8,596.9 620.6,579.7 622.7,611.7 623.8,564.8 625.8,589.1 628.1,579.7 630.5,604.7 633.1,571.9 635.6,601.6 637.5,584.4 639.8,593.8 642.2,564.1 644.5,589.1 646.4,620.3 648.4,568.8 650.8,575.0 654.7,585.9 657.0,578.1 658.6,598.4 661.7,569.5 664.1,596.9 666.4,625.8 668.8,575.0 671.1,579.7 672.7,628.1 675.8,587.5 678.1,578.9 680.5,601.6 682.5,568.0 685.9,593.8 688.3,609.4 690.6,573.4 692.0,594.7 693.1,580.9 694.5,600.8 696.1,571.9 700.0,584.4 701.6,602.3 704.4,572.7 707.0,598.4 709.4,600.0 712.5,568.0 714.8,575.0 717.5,576.6 719.5,589.1 720.9,577.2 722.0,585.7 723.4,573.4 725.8,587.5 727.8,609.4 728.9,577.3 731.6,611.7 733.1,581.2 735.9,585.9 737.5,594.5 740.3,574.2 743.8,573.4 746.1,592.2 747.7,577.3 749.2,596.9 750.8,585.9 753.1,603.1 755.5,578.1 757.0,601.6 758.5,583.5 759.7,595.0 761.2,574.2 764.4,614.1 766.4,574.2 768.8,583.6 771.9,576.6 773.6,603.6 774.9,586.4 776.6,610.9 778.1,581.2 780.5,614.1 781.2,573.4 784.4,579.7 785.8,600.3 786.9,588.9 788.3,608.6 790.6,581.2 793.8,578.1 796.9,614.1 798.3,585.1 799.4,603.9 800.8,575.0 803.1,600.0 806.2,579.7 808.6,575.0 811.7,584.4 814.8,608.6 817.2,577.3 821.1,584.4 823.4,573.4 825.0,591.4 827.3,569.5 828.4,604.7 830.5,573.4 832.8,614.1 835.2,646.9 837.5,592.2 838.9,577.7 840.0,586.1 841.4,574.2 843.8,589.1 846.6,609.4 849.2,596.9 852.3,572.7 855.5,581.2 856.2,595.3 859.4,575.0 862.5,576.6 865.3,617.2 868.0,575.8 870.3,594.5 873.4,578.9 875.8,578.9 878.1,581.2 881.2,610.2 884.4,581.2 887.5,609.4 889.8,582.0 893.8,573.4 896.9,583.6 900.0,589.1 901.6,623.4 904.7,624.2 906.2,582.0 908.6,603.1 910.9,575.8 912.5,616.4 914.8,595.3 915.6,620.3 917.5,574.2 920.3,590.6 922.7,610.9 925.0,592.2 926.6,612.5 929.7,578.1 932.8,575.0 935.2,606.2 937.5,573.4 939.1,598.4 941.4,568.8 943.0,585.9 945.3,634.4 947.7,579.7 950.0,578.1 953.1,574.2 955.5,589.1 957.5,626.6 959.4,571.9 960.9,603.1 962.5,584.4 965.6,598.4 968.8,609.4 971.9,574.2 974.2,598.4 977.3,573.4 979.7,593.8 982.8,582.8 986.7,570.3 988.8,611.7 990.6,581.2 993.8,601.6 995.4,586.3 996.8,594.7 998.4,579.7 1001.6,613.3 1003.9,578.9 1006.2,571.9 1007.8,604.7 1010.9,581.2 1011.7,605.5 1013.1,577.7 1014.2,591.7 1015.6,568.8 1017.2,598.4 1020.3,571.9 1021.9,587.5 1025.0,569.5 1028.1,571.9 1030.5,632.0 1033.6,568.8 1035.9,589.1 1039.1,583.6 1040.6,612.5 1043.0,575.8 1043.8,618.8 1046.1,575.8 1047.5,596.3 1048.6,582.4 1050.0,601.6 1052.3,575.0 1053.9,587.5 1056.2,577.3 1059.4,571.9 1061.7,575.0 1063.3,593.8" fill="none" stroke="#1F77B4" stroke-width="3.3" stroke-linejoin="round"/>
<line x1="59.5" y1="594.2" x2="1112" y2="586.6" stroke="#000" stroke-width="2.2" stroke-dasharray="6 2"/>
</svg>
<svg style="left:680px;top:844px" width="14" height="22" viewBox="0 0 14 22"><path d="M0.5 0.5 L0.5 16.5 L4.5 12.5 L8 20 L10.5 19 L7.5 11.5 L11.5 11.5 Z" fill="#fff" stroke="#000" stroke-width="1"/></svg>
<div style="left:1121px;top:77px;width:148px;height:61px;background:#D4D0C8;border:1px solid #B0AEA8"></div>
<div class="t" style="left:1124px;top:80px;font-weight:bold;font-size:11.8px;line-height:13px">Aggregate End Time</div>
<svg style="left:1256px;top:83px" width="9" height="9" viewBox="0 0 9 9"><path d="M1.5 0v8M3.5 2v6M5.5 4v4M7.5 6v2" stroke="#5A5A5A"/></svg>
<div class="t" style="left:1130px;top:99px;font-size:11px">5/8/2009 7:‹</div>
<div class="t" style="left:1200px;top:99px;font-size:11px">5/16/2009 4</div>
<svg style="left:1125px;top:115px" width="140" height="20" viewBox="0 0 140 20">
<rect x="10" y="6" width="114" height="8" fill="#A4A6B4" stroke="#6A6A70"/>
<path d="M2.5 2.5 h8 v15 l-8 -6z" fill="#F0F0F0" stroke="#000"/><path d="M8 3 v13" stroke="#707070" stroke-width="2"/>
<path d="M123.5 2.5 h8 v9 l-8 6z" fill="#F0F0F0" stroke="#000"/><path d="M129 3 v12" stroke="#707070" stroke-width="2"/>
</svg>
<div style="left:1121px;top:147px;width:148px;height:194px;background:#D4D0C8;border:1px solid #B0AEA8"></div>
<div class="t" style="left:1124px;top:150px;font-weight:bold;font-size:11.8px">Work Order ID</div>
<svg style="left:1256px;top:153px" width="9" height="9" viewBox="0 0 9 9"><path d="M1.5 0v8M3.5 2v6M5.5 4v4M7.5 6v2" stroke="#5A5A5A"/></svg>
<div style="left:1127px;top:169px;width:13px;height:13px;border:2px solid #000;background:#F8F8F8"></div>
<div class="t" style="left:1147px;top:170px;font-size:10.8px;line-height:13px">Null</div>
<div style="left:1127px;top:186px;width:13px;height:13px;border:2px solid #000;background:#F8F8F8"></div>
<svg style="left:1127px;top:186px" width="13" height="13" viewBox="0 0 13 13"><path d="M3 6 l2.3 2.5 L10 3.5" fill="none" stroke="#000" stroke-width="2"/></svg>
<div class="t" style="left:1147px;top:187px;font-size:10.8px;line-height:13px">WO-M01-128-19-39-34</div>
<div style="left:1127px;top:203px;width:13px;height:13px;border:2px solid #000;background:#F8F8F8"></div>
<svg style="left:1127px;top:203px" width="13" height="13" viewBox="0 0 13 13"><path d="M3 6 l2.3 2.5 L10 3.5" fill="none" stroke="#000" stroke-width="2"/></svg>
<div class="t" style="left:1147px;top:204px;font-size:10.8px;line-height:13px">WO-M02-128-19-41-58</div>
<div style="left:1127px;top:220px;width:13px;height:13px;border:2px solid #000;background:#F8F8F8"></div>
<svg style="left:1127px;top:220px" width="13" height="13" viewBox="0 0 13 13"><path d="M3 6 l2.3 2.5 L10 3.5" fill="none" stroke="#000" stroke-width="2"/></svg>
<div class="t" style="left:1147px;top:221px;font-size:10.8px;line-height:13px">WO-M03-128-20-28-55</div>
<div style="left:1127px;top:237px;width:13px;height:13px;border:2px solid #000;background:#F8F8F8"></div>
<svg style="left:1127px;top:237px" width="13" height="13" viewBox="0 0 13 13"><path d="M3 6 l2.3 2.5 L10 3.5" fill="none" stroke="#000" stroke-width="2"/></svg>
<div class="t" style="left:1147px;top:238px;font-size:10.8px;line-height:13px">WO-M04-128-20-27-50</div>
<div style="left:1127px;top:254px;width:13px;height:13px;border:2px solid #000;background:#F8F8F8"></div>
<svg style="left:1127px;top:254px" width="13" height="13" viewBox="0 0 13 13"><path d="M3 6 l2.3 2.5 L10 3.5" fill="none" stroke="#000" stroke-width="2"/></svg>
<div class="t" style="left:1147px;top:255px;font-size:10.8px;line-height:13px">WO-M04-128-20-28-57</div>
<div style="left:1127px;top:271px;width:13px;height:13px;border:2px solid #000;background:#F8F8F8"></div>
<svg style="left:1127px;top:271px" width="13" height="13" viewBox="0 0 13 13"><path d="M3 6 l2.3 2.5 L10 3.5" fill="none" stroke="#000" stroke-width="2"/></svg>
<div class="t" style="left:1147px;top:272px;font-size:10.8px;line-height:13px">WO-M05-128-20-29-30</div>
<div style="left:1127px;top:288px;width:13px;height:13px;border:2px solid #000;background:#F8F8F8"></div>
<svg style="left:1127px;top:288px" width="13" height="13" viewBox="0 0 13 13"><path d="M3 6 l2.3 2.5 L10 3.5" fill="none" stroke="#000" stroke-width="2"/></svg>
<div class="t" style="left:1147px;top:289px;font-size:10.8px;line-height:13px">WO-M06-128-20-29-32</div>
<div style="left:1127px;top:305px;width:13px;height:13px;border:2px solid #000;background:#F8F8F8"></div>
<svg style="left:1127px;top:305px" width="13" height="13" viewBox="0 0 13 13"><path d="M3 6 l2.3 2.5 L10 3.5" fill="none" stroke="#000" stroke-width="2"/></svg>
<div class="t" style="left:1147px;top:306px;font-size:10.8px;line-height:13px">WO-M07-128-20-29-34</div>
<div style="left:1127px;top:322px;width:13px;height:13px;border:2px solid #000;background:#F8F8F8"></div>
<svg style="left:1127px;top:322px" width="13" height="13" viewBox="0 0 13 13"><path d="M3 6 l2.3 2.5 L10 3.5" fill="none" stroke="#000" stroke-width="2"/></svg>
<div class="t" style="left:1147px;top:323px;font-size:10.8px;line-height:13px">WO-M08-128-20-29-36</div>
<div style="left:1121px;top:350px;width:148px;height:194px;background:#D4D0C8;border:1px solid #B0AEA8"></div>
<div class="t" style="left:1124px;top:353px;font-weight:bold;font-size:11.8px">Equipment Name</div>
<svg style="left:1256px;top:356px" width="9" height="9" viewBox="0 0 9 9"><path d="M1.5 0v8M3.5 2v6M5.5 4v4M7.5 6v2" stroke="#5A5A5A"/></svg>
<div style="left:1127px;top:372px;width:13px;height:13px;border:2px solid #000;background:#F8F8F8"></div>
<div class="t" style="left:1147px;top:373px;font-size:10.8px;line-height:13px">Null</div>
<div style="left:1127px;top:389px;width:13px;height:13px;border:2px solid #000;background:#F8F8F8"></div>
<div class="t" style="left:1147px;top:390px;font-size:10.8px;line-height:13px">DemoArea_001</div>
<div style="left:1127px;top:406px;width:13px;height:13px;border:2px solid #000;background:#F8F8F8"></div>
<svg style="left:1127px;top:406px" width="13" height="13" viewBox="0 0 13 13"><path d="M3 6 l2.3 2.5 L10 3.5" fill="none" stroke="#000" stroke-width="2"/></svg>
<div class="t" style="left:1147px;top:407px;font-size:10.8px;line-height:13px">Machine_001</div>
<div style="left:1127px;top:423px;width:13px;height:13px;border:2px solid #000;background:#F8F8F8"></div>
<svg style="left:1127px;top:423px" width="13" height="13" viewBox="0 0 13 13"><path d="M3 6 l2.3 2.5 L10 3.5" fill="none" stroke="#000" stroke-width="2"/></svg>
<div class="t" style="left:1147px;top:424px;font-size:10.8px;line-height:13px">Machine_002</div>
<div style="left:1127px;top:440px;width:13px;height:13px;border:2px solid #000;background:#F8F8F8"></div>
<svg style="left:1127px;top:440px" width="13" height="13" viewBox="0 0 13 13"><path d="M3 6 l2.3 2.5 L10 3.5" fill="none" stroke="#000" stroke-width="2"/></svg>
<div class="t" style="left:1147px;top:441px;font-size:10.8px;line-height:13px">Machine_003</div>
<div style="left:1127px;top:457px;width:13px;height:13px;border:2px solid #000;background:#F8F8F8"></div>
<svg style="left:1127px;top:457px" width="13" height="13" viewBox="0 0 13 13"><path d="M3 6 l2.3 2.5 L10 3.5" fill="none" stroke="#000" stroke-width="2"/></svg>
<div class="t" style="left:1147px;top:458px;font-size:10.8px;line-height:13px">Machine_004</div>
<div style="left:1127px;top:474px;width:13px;height:13px;border:2px solid #000;background:#F8F8F8"></div>
<svg style="left:1127px;top:474px" width="13" height="13" viewBox="0 0 13 13"><path d="M3 6 l2.3 2.5 L10 3.5" fill="none" stroke="#000" stroke-width="2"/></svg>
<div class="t" style="left:1147px;top:475px;font-size:10.8px;line-height:13px">Machine_005</div>
<div style="left:1127px;top:491px;width:13px;height:13px;border:2px solid #000;background:#F8F8F8"></div>
<svg style="left:1127px;top:491px" width="13" height="13" viewBox="0 0 13 13"><path d="M3 6 l2.3 2.5 L10 3.5" fill="none" stroke="#000" stroke-width="2"/></svg>
<div class="t" style="left:1147px;top:492px;font-size:10.8px;line-height:13px">Machine_006</div>
<div style="left:1127px;top:508px;width:13px;height:13px;border:2px solid #000;background:#F8F8F8"></div>
<svg style="left:1127px;top:508px" width="13" height="13" viewBox="0 0 13 13"><path d="M3 6 l2.3 2.5 L10 3.5" fill="none" stroke="#000" stroke-width="2"/></svg>
<div class="t" style="left:1147px;top:509px;font-size:10.8px;line-height:13px">Machine_007</div>
<div style="left:1127px;top:525px;width:13px;height:13px;border:2px solid #000;background:#F8F8F8"></div>
<svg style="left:1127px;top:525px" width="13" height="13" viewBox="0 0 13 13"><path d="M3 6 l2.3 2.5 L10 3.5" fill="none" stroke="#000" stroke-width="2"/></svg>
<div class="t" style="left:1147px;top:526px;font-size:10.8px;line-height:13px">Machine_008</div>
<div style="left:0px;top:958px;width:1280px;height:16px;background:#D4D0C8"></div>
<div style="left:2px;top:958px;width:196px;height:16px;background:#C8C6C0"></div>
<div style="left:0px;top:958px;width:1280px;height:1px;background:#8A8884"></div>
<div style="left:0px;top:973px;width:1280px;height:1px;background:#8A8884"></div>
<div style="left:197px;top:958px;width:1px;height:16px;background:#8A8884"></div>
<div class="t" style="left:7px;top:959px;font-weight:bold;font-size:11.5px;line-height:14px">Dashboard</div>
<svg style="left:183px;top:962px" width="7" height="9" viewBox="0 0 7 9"><path d="M0.5 3.5 L3 0.5 L5.5 3.5z M0.5 5.5 L3 8.5 L5.5 5.5z" fill="#707070"/></svg>
<svg style="left:1265px;top:962px" width="7" height="9" viewBox="0 0 7 9"><path d="M0.5 3.5 L3 0.5 L5.5 3.5z M0.5 5.5 L3 8.5 L5.5 5.5z" fill="#707070"/></svg>
<svg style="left:0;top:958px" width="1280" height="16" viewBox="0 0 1280 16">
<path d="M577 0 L584 15 L669 15 L677 0 Z" fill="#fff"/>
<g stroke="#000" stroke-width="1" fill="none">
<path d="M203 0 L211 15"/>
<path d="M346 15 L354 0 M350 8 L353 15"/>
<path d="M454 15 L462 0 M458 8 L461 15"/>
<path d="M577 0 L584 15 L669 15 L677 0"/>
</g></svg>
<div class="t" style="left:223px;top:959px;font-size:11px;line-height:14px;letter-spacing:-0.12px">Work Order Production</div>
<div class="t" style="left:363px;top:959px;font-size:11px;line-height:14px;letter-spacing:-0.1px">Production trend</div>
<div class="t" style="left:472px;top:959px;font-size:11px;line-height:14px;letter-spacing:-0.25px">Machine Production</div>
<div class="t" style="left:587px;top:959px;font-weight:bold;font-size:11.5px;line-height:14px;letter-spacing:0.2px">MyDashboard</div>
<div style="left:0px;top:67px;width:1px;height:907px;background:#808080"></div>
<div style="left:1px;top:69px;width:1px;height:905px;background:#404040"></div>
<div style="left:0px;top:974px;width:1280px;height:22px;background:#D4D0C8"></div>
<div style="left:0px;top:974px;width:1280px;height:1px;background:#fff"></div>
<div style="left:8px;top:978px;width:1038px;height:18px;border-top:1px solid #808080;border-left:1px solid #808080;border-bottom:1px solid #fff;border-right:1px solid #fff"></div>
<div style="left:1049px;top:978px;width:126px;height:18px;border-top:1px solid #808080;border-left:1px solid #808080;border-bottom:1px solid #fff;border-right:1px solid #fff"></div>
<div style="left:1178px;top:978px;width:25px;height:18px;border-top:1px solid #808080;border-left:1px solid #808080;border-bottom:1px solid #fff;border-right:1px solid #fff"></div>
<div style="left:1206px;top:978px;width:25px;height:18px;border-top:1px solid #808080;border-left:1px solid #808080;border-bottom:1px solid #fff;border-right:1px solid #fff"></div>
<div style="left:1234px;top:978px;width:44px;height:18px;border-top:1px solid #808080;border-left:1px solid #808080;border-bottom:1px solid #fff;border-right:1px solid #fff"></div>
<div style="left:0px;top:996px;width:1280px;height:29px;background:#D4D0C8"></div>
<div style="left:0px;top:996px;width:1280px;height:1px;background:#fff"></div>
<div style="left:0px;top:1024px;width:1280px;height:1px;background:#A8B8D0"></div>
<div style="left:2px;top:1000px;width:52px;height:22px;background:#D4D0C8;border-top:1px solid #fff;border-left:1px solid #fff;border-right:1px solid #404040;border-bottom:1px solid #404040;box-shadow:inset -1px -1px 0 #808080"></div>
<svg style="left:5px;top:1003px" width="16" height="16" viewBox="0 0 16 16">
<path d="M1 2 q3-1 6 0 v6 q-3-1 -6 0z" fill="#E8542A"/><path d="M8 2 q3 1 7 0 v6 q-3 1 -7 0z" fill="#6BB82E"/>
<path d="M1 9 q3-1 6 0 v6 q-3-1 -6 0z" fill="#3A6CD8"/><path d="M8 9 q3 1 7 0 v6 q-3 1 -7 0z" fill="#F2C418"/></svg>
<div class="t" style="left:22px;top:1004px;font-weight:bold;font-size:12px;line-height:14px">Start</div>
<div style="left:61px;top:1001px;width:1px;height:19px;background:#fff"></div>
<div style="left:62px;top:1001px;width:1px;height:19px;background:#808080"></div>
<div style="left:189px;top:1001px;width:1px;height:19px;background:#fff"></div>
<div style="left:190px;top:1001px;width:1px;height:19px;background:#808080"></div>
<svg style="left:0;top:996px" width="200" height="29" viewBox="0 0 200 29">
<rect x="71.5" y="7.5" width="13" height="13" rx="2" fill="#4A86D0" stroke="#1E4E98"/><rect x="74" y="10" width="8" height="8" fill="#F4F8FC"/><path d="M75 12h6M75 14h4M75 16h5" stroke="#5A8AC8"/><circle cx="84" cy="13" r="1.5" fill="#E05A20"/>
<circle cx="101.5" cy="14" r="6" fill="#E8F2FC" stroke="#2A7AD8" stroke-width="2.4"/><path d="M96.5 13.5 h10" stroke="#2A7AD8" stroke-width="2"/><path d="M94 19 q6 -12 14 -10" stroke="#4AA0F0" stroke-width="1.4" fill="none"/>
<rect x="117" y="8.5" width="15" height="12" fill="#000"/><rect x="117" y="8" width="15" height="2" fill="#2A5AB0"/><text x="118.5" y="18" font-size="7.5" fill="#fff" font-weight="bold" font-family="Liberation Sans">C:\</text>
<rect x="142.5" y="7.5" width="12" height="14" fill="#D8F0EC" stroke="#80A8A0"/><path d="M143 7.5h12" stroke="#606060" stroke-dasharray="1 1"/><text x="144.5" y="19" font-size="11" fill="#1A7A4A" font-weight="bold" font-family="Liberation Sans">X</text>
<rect x="164.5" y="8.5" width="12" height="13" fill="#F0EEF8" stroke="#A8A4B8"/><path d="M166 11h8M166 13.5h8M166 16h6" stroke="#B8B4D0"/><path d="M168 19 l9 -11" stroke="#D8B020" stroke-width="2.2"/><path d="M168 19 l-1 1.5" stroke="#404040" stroke-width="1.2"/>
</svg>
<div style="left:196px;top:1000px;width:160px;height:22px;background:#D4D0C8;border-top:1px solid #fff;border-left:1px solid #fff;border-right:1px solid #404040;border-bottom:1px solid #404040;box-shadow:inset -1px -1px 0 #808080"></div>
<svg style="left:199px;top:1003px" width="17" height="16" viewBox="0 0 17 16"><circle cx="8.5" cy="8" r="4.5" fill="#6AC0F0"/><path d="M2.5 2.5 l11 11" stroke="#C03890" stroke-width="3"/><path d="M3 14 q6 -1 10.5 -11" stroke="#F09040" stroke-width="2.5" fill="none"/><path d="M6 11 l6.5 -5.5" stroke="#5A3AC8" stroke-width="2"/></svg>
<div class="t" style="left:220px;top:1004px;font-size:11px;line-height:14px">ArchestrA IDE</div>
<div style="left:359px;top:1000px;width:160px;height:22px;background:#D4D0C8;border-top:1px solid #fff;border-left:1px solid #fff;border-right:1px solid #404040;border-bottom:1px solid #404040;box-shadow:inset -1px -1px 0 #808080"></div>
<svg style="left:362px;top:1003px" width="17" height="16" viewBox="0 0 17 16"><rect x="4" y="1" width="11" height="14" fill="#fff" stroke="#808080"/><circle cx="7" cy="9" r="5" fill="#2A78D8"/><text x="4.5" y="12.5" font-size="8" fill="#fff" font-weight="bold" font-family="Liberation Sans">e</text></svg>
<div class="t" style="left:382px;top:1004px;font-size:11px;line-height:14px;letter-spacing:-0.35px">W O N D E R W A R E - M...</div>
<div style="left:522px;top:1000px;width:159px;height:22px;background:#E4E2DC;border-top:1px solid #404040;border-left:1px solid #404040;border-right:1px solid #fff;border-bottom:1px solid #fff;box-shadow:inset 1px 1px 0 #808080"></div>
<svg style="left:527px;top:1003px" width="16" height="16" viewBox="0 0 16 16"><rect x="0.5" y="0.5" width="15" height="15" fill="#F4F4F8" stroke="#8090B0"/>
<g stroke-width="1.6"><path d="M5 3v4M3 5h4" stroke="#E07B39"/><path d="M11 3v4M9 5h4" stroke="#5B7BA8"/><path d="M5 9v4M3 11h4" stroke="#C0504D"/><path d="M11 9v4M9 11h4" stroke="#2F4F7F"/></g></svg>
<div class="t" style="left:547px;top:1004px;font-weight:bold;font-size:11px;line-height:14px;letter-spacing:0.3px">Intelligence Analytics...</div>
<div style="left:1126px;top:1000px;width:152px;height:22px;border-top:1px solid #808080;border-left:1px solid #808080;border-bottom:1px solid #fff;border-right:1px solid #fff"></div>
<svg style="left:1126px;top:1000px" width="152" height="22" viewBox="0 0 152 22">
<rect x="3.5" y="3.5" width="14" height="14" fill="#F4F4F8" stroke="#707880"/><g stroke-width="1.5"><path d="M10.5 6v9M6 10.5h9" stroke="#E0A040"/><path d="M6.5 5v3M5 6.5h3" stroke="#9A9AAA"/><path d="M14.5 5v3M13 6.5h3" stroke="#5B7BA8"/><path d="M6.5 13v3M5 14.5h3" stroke="#8A3A5A"/><path d="M14.5 13v3M13 14.5h3" stroke="#3A4A7A"/></g>
<rect x="21" y="3" width="13" height="4" fill="#000"/><rect x="21" y="7" width="5" height="5" fill="#000"/><path d="M23 13 q5 -6 12 -6" stroke="#30C060" stroke-width="2.5" fill="none"/><path d="M22 14 l5 -4" stroke="#F0A020" stroke-width="2"/><rect x="21" y="14" width="5" height="5" fill="#E01818"/><rect x="31" y="14" width="5" height="5" fill="#E01818"/><rect x="26" y="14" width="5" height="5" fill="#80E0A0"/>
<path d="M41 3 h12 v8 q0 6 -6 8.5 q-6 -2.5 -6 -8.5z" fill="#2A58B8" stroke="#1A3A88"/><path d="M43 5 h8 v6 q0 4 -4 6 q-4 -2 -4 -6z" fill="#fff"/><path d="M44.5 6.5 l2.5 8 2.5-8" stroke="#D81818" stroke-width="2" fill="none"/>
<rect x="58" y="5" width="9" height="9" fill="#3A4A90"/><rect x="62" y="3" width="6" height="6" fill="#2A3A80"/><circle cx="60" cy="14" r="2.5" fill="#A080D0"/><path d="M62 8 l9 10 M71 8 l-9 10" stroke="#E02020" stroke-width="2.5"/>
<rect x="76.5" y="3.5" width="10" height="10" rx="1.5" fill="#1E4A8A" stroke="#fff"/><rect x="81.5" y="8.5" width="10" height="10" rx="1.5" fill="#1E4A8A" stroke="#fff"/><rect x="75.5" y="2.5" width="17" height="17" rx="3" fill="none" stroke="#2A5A9A"/>
</svg>
<div class="t" style="left:1228px;top:1004px;font-size:11px;line-height:14px">1:50 AM</div>
</body></html>
